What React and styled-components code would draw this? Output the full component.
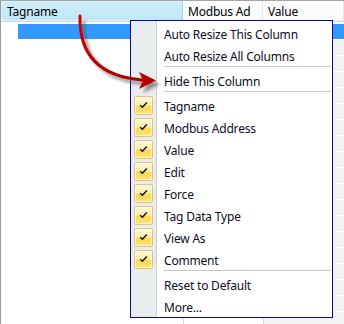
import React from "react";
import styled, { createGlobalStyle } from "styled-components";

const Global = createGlobalStyle`
  html, body { margin: 0; padding: 0; background: #fff; }
  body { width: 344px; height: 324px; overflow: hidden; font-family: "Noto Sans", "Open Sans", sans-serif; }
`;

const Stage = styled.div`
  position: relative;
  width: 344px;
  height: 324px;
  overflow: hidden;
  background: #fff;
`;

const Grid = styled.div`
  display: flex;
  flex-direction: column;
  height: 100%;
  border-left: 1px solid #9b9b9b;
  box-sizing: border-box;
`;

const TopStrip = styled.div`
  height: 4px;
  background: #f0f0f0;
  border-bottom: 1px solid #a5a5a5;
`;

const HeaderRow = styled.div`
  display: flex;
  height: 23px;
  border-bottom: 1px solid #d5d5d5;
  box-sizing: border-box;
`;

const HeaderCell = styled.div`
  box-sizing: border-box;
  width: ${(p) => p.$w}px;
  flex: ${(p) => (p.$grow ? "1" : "none")};
  display: flex;
  align-items: center;
  padding: 1px 0 0 5px;
  font-size: 12px;
  letter-spacing: -0.2px;
  color: #000;
  white-space: nowrap;
  overflow: hidden;
  background: ${(p) =>
    p.$hot ? "linear-gradient(#cdeefb, #bfe6f8)" : "linear-gradient(#ffffff, #f7f8f9)"};
  border: ${(p) => (p.$hot ? "1px solid #dcf2fb" : "none")};
  border-right: 1px solid ${(p) => (p.$hot ? "#a3d5ec" : "#e3e4e6")};
`;

const Body = styled.div`
  display: flex;
  flex-direction: column;
  padding-top: 1px;
`;

const Row = styled.div`
  display: flex;
  height: 16px;
  box-sizing: border-box;
`;

const SelectedBar = styled.div`
  margin: 1px 0 0 17px;
  flex: 1;
  background: #3399ff;
`;

const Cell = styled.div`
  box-sizing: border-box;
  width: ${(p) => p.$w}px;
  flex: ${(p) => (p.$grow ? "1" : "none")};
  background: ${(p) => (p.$shade ? "#f3f3f3" : "#fff")};
  border-top: 1px solid #fff;
  border-left: ${(p) => (p.$divider ? "1px solid #dcdcdc" : "none")};
`;

const Menu = styled.div`
  position: absolute;
  left: 130px;
  top: 20px;
  width: 203px;
  box-sizing: border-box;
  border: 1px solid #0b0b8a;
  padding: 1px 0 0;
  background: linear-gradient(
    to right,
    #e8eced 0,
    #e8eced 25px,
    #cdd0d2 25px,
    #cdd0d2 26px,
    #ffffff 26px
  );
  display: flex;
  flex-direction: column;
  z-index: 2;
`;

const Item = styled.div`
  display: flex;
  align-items: center;
  height: 22px;
  font-size: 12px;
  letter-spacing: -0.2px;
  color: #0c0c1c;
  white-space: nowrap;
`;

const Label = styled.span`
  display: block;
  padding-top: 2px;
`;

const IconSlot = styled.div`
  width: 33px;
  flex: none;
  display: flex;
  align-items: center;
  padding-left: 3px;
  box-sizing: border-box;
`;

const CheckBox = styled.div`
  width: 19px;
  height: 19px;
  box-sizing: border-box;
  border: 1px solid #e2c476;
  border-radius: 2px;
  background: linear-gradient(#fff8dc 0%, #fdeeb0 45%, #fcd951 55%, #fde27a 100%);
  box-shadow: inset 0 0 0 1px rgba(255, 255, 255, 0.55);
  display: flex;
  align-items: center;
  justify-content: center;
`;

const Separator = styled.div`
  height: 3px;
  margin: 0 1px 0 33px;
  background: linear-gradient(#c8c8c8 0, #c8c8c8 1px, #fff 1px, #fff 2px, transparent 2px);
`;

const ArrowLayer = styled.svg`
  position: absolute;
  left: 0;
  top: 0;
  width: 344px;
  height: 324px;
  pointer-events: none;
  z-index: 3;
`;

const Check = () => (
  <CheckBox>
    <svg width="9" height="8" viewBox="0 0 9 8">
      <path d="M1.2 4.2 L3.4 6.2 L7.8 1.6" fill="none" stroke="#111" strokeWidth="1.4" />
    </svg>
  </CheckBox>
);

const MenuItem = ({ checked, children }) => (
  <Item>
    <IconSlot>{checked ? <Check /> : null}</IconSlot>
    <Label>{children}</Label>
  </Item>
);

const columns = ["Tagname", "Modbus Address", "Value", "Edit", "Force", "Tag Data Type", "View As", "Comment"];

export default function App() {
  const rows = Array.from({ length: 18 });
  return (
    <Stage>
      <Global />
      <Grid>
        <TopStrip />
        <HeaderRow>
          <HeaderCell $w={182} $hot>Tagname</HeaderCell>
          <HeaderCell $w={80}>Modbus Ad</HeaderCell>
          <HeaderCell $grow>Value</HeaderCell>
        </HeaderRow>
        <Body>
          <Row>
            <SelectedBar />
          </Row>
          {rows.map((_, i) => (
            <Row key={i}>
              <Cell $w={182} />
              <Cell $w={80} $divider />
              <Cell $grow $divider $shade />
            </Row>
          ))}
        </Body>
      </Grid>
      <Menu>
        <MenuItem>Auto Resize This Column</MenuItem>
        <MenuItem>Auto Resize All Columns</MenuItem>
        <Separator />
        <MenuItem>Hide This Column</MenuItem>
        <Separator />
        {columns.map((c) => (
          <MenuItem key={c} checked>
            {c}
          </MenuItem>
        ))}
        <Separator />
        <MenuItem>Reset to Default</MenuItem>
        <MenuItem>More...</MenuItem>
      </Menu>
      <ArrowLayer viewBox="0 0 344 324">
        <defs>
          <filter id="sh" x="-20%" y="-20%" width="140%" height="140%">
            <feGaussianBlur stdDeviation="1.6" />
          </filter>
          <linearGradient id="rg" x1="0" y1="0" x2="1" y2="1">
            <stop offset="0" stopColor="#d00000" />
            <stop offset="1" stopColor="#a80000" />
          </linearGradient>
        </defs>
        <g transform="translate(4 4)" opacity="0.6" filter="url(#sh)">
          <path d="M80 17 C 79 52, 96 76, 142 80" fill="none" stroke="#555" strokeWidth="3" />
          <path d="M156 80.5 L139 72 L143 80.5 L139 89 Z" fill="#555" />
        </g>
        <path d="M80 16 C 79 52, 96 76, 142 80" fill="none" stroke="url(#rg)" strokeWidth="3" strokeLinecap="round" />
        <path d="M156 80.5 L139 72 L143 80.5 L139 89 Z" fill="#b80000" />
      </ArrowLayer>
    </Stage>
  );
}
